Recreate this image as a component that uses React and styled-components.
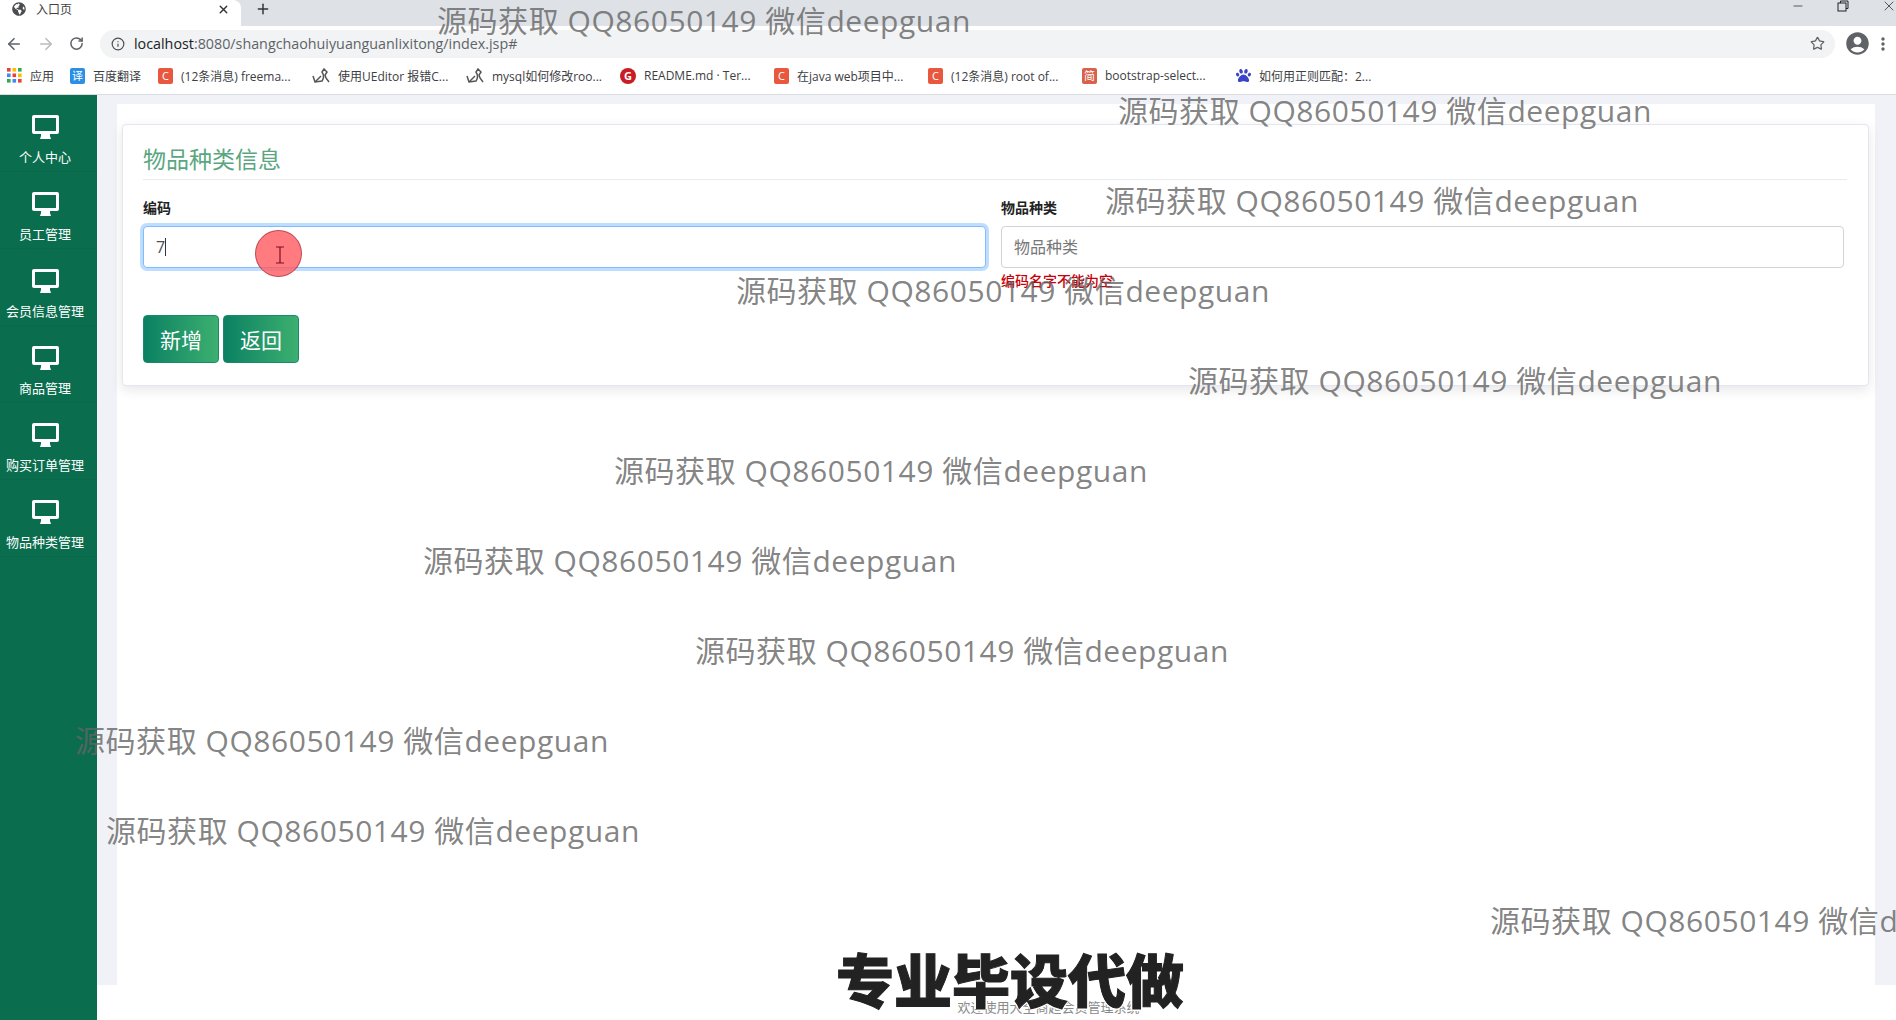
import React from 'react';
import styled, { createGlobalStyle } from 'styled-components';
import { ArrowLeft, ArrowRight, RotateCw, Info, Star, Plus, X, Minus } from 'lucide-react';
import { FaGlobeAmericas, FaPaw } from 'react-icons/fa';
import { MdAccountCircle, MdMoreVert } from 'react-icons/md';

const FONT = '"Open Sans", "Noto Sans CJK SC", "Liberation Sans", sans-serif';

const GlobalStyle = createGlobalStyle`
    html, body {
        margin: 0;
        padding: 0;
        background: #fff;
    }
    body {
        font-family: ${FONT};
        overflow: hidden;
    }
    * {
        box-sizing: border-box;
    }
`;

const menuItems = ['个人中心', '员工管理', '会员信息管理', '商品管理', '购买订单管理', '物品种类管理'];

const bookmarks = [
    { icon: 'apps', text: '应用', width: 63 },
    { icon: 'fanyi', text: '百度翻译', width: 88 },
    { icon: 'csdn', text: '(12条消息) freema...' },
    { icon: 'bird', text: '使用UEditor 报错C...' },
    { icon: 'bird', text: 'mysql如何修改roo...' },
    { icon: 'gitee', text: 'README.md · Ter...' },
    { icon: 'csdn', text: '在java web项目中...' },
    { icon: 'csdn', text: '(12条消息) root of...' },
    { icon: 'jian', text: 'bootstrap-select...' },
    { icon: 'paw', text: '如何用正则匹配：2...' },
];

const watermarks = [
    [437, -1], [1118, 89], [1105, 179], [736, 269], [1188, 359], [614, 449],
    [423, 539], [695, 629], [75, 719], [106, 809], [1490, 899],
];

function AppsIcon() {
    const colors = ['#ea4335', '#fbbc05', '#34a853', '#4285f4', '#ea4335', '#fbbc05', '#34a853', '#4285f4', '#ea4335'];
    return (
        <svg width="15" height="15" viewBox="0 0 15 15">
            {colors.map((c, i) => (
                <rect key={i} x={(i % 3) * 5.5} y={Math.floor(i / 3) * 5.5} width="3.6" height="3.6" fill={c} />
            ))}
        </svg>
    );
}

function BirdIcon() {
    return (
        <svg width="18" height="16" viewBox="0 0 18 16" fill="none" stroke="#555" strokeWidth="1.5">
            <path d="M1 8l2 6 7-1c2-3 2-6 0-9L12 1l3 3-2 3 1 3 3 4" />
            <path d="M3 14l6-6" />
        </svg>
    );
}

function MonitorIcon() {
    return (
        <svg width="27" height="24" viewBox="0 0 27 24">
            <path
                fill="#fff"
                fillRule="evenodd"
                d="M2 0h23a2 2 0 0 1 2 2v15a2 2 0 0 1-2 2h-7v2l1 3H8l1-3v-2H2a2 2 0 0 1-2-2V2a2 2 0 0 1 2-2zM3 3v13h21V3z"
            />
        </svg>
    );
}

function RestoreIcon() {
    return (
        <svg width="12" height="12" viewBox="0 0 12 12" fill="none" stroke="#222" strokeWidth="1">
            <rect x="1" y="3" width="8" height="8" />
            <path d="M3.5 3V1h7.5v7.5H9" />
        </svg>
    );
}

function Bookmark({ icon, text, width }) {
    return (
        <BookmarkItem $width={width}>
            {icon === 'apps' && <AppsIcon />}
            {icon === 'fanyi' && <FaviconBox $bg="#2b8fe6">译</FaviconBox>}
            {icon === 'csdn' && <FaviconBox $bg="#e9573f">C</FaviconBox>}
            {icon === 'jian' && <FaviconBox $bg="#d9604a">简</FaviconBox>}
            {icon === 'gitee' && <GiteeBadge>G</GiteeBadge>}
            {icon === 'bird' && <BirdIcon />}
            {icon === 'paw' && <FaPaw size={15} color="#3a44c4" />}
            <BookmarkText>{text}</BookmarkText>
        </BookmarkItem>
    );
}

export default function App() {
    return (
        <Page>
            <GlobalStyle />
            <Browser>
                <TabStrip>
                    <ActiveTab>
                        <FaGlobeAmericas size={14} color="#4a4d52" />
                        <TabTitle>入口页</TabTitle>
                        <X size={13} color="#333" strokeWidth={2.5} />
                    </ActiveTab>
                    <NewTab>
                        <Plus size={16} color="#333" strokeWidth={2.2} />
                    </NewTab>
                    <WindowControls>
                        <Minus size={14} color="#222" strokeWidth={1.2} />
                        <RestoreIcon />
                        <X size={16} color="#222" strokeWidth={1.1} />
                    </WindowControls>
                </TabStrip>
                <Toolbar>
                    <NavButtons>
                        <ArrowLeft size={18} color="#5f6368" strokeWidth={2.2} />
                        <ArrowRight size={18} color="#b9bcc0" strokeWidth={2.2} />
                        <RotateCw size={15} color="#5f6368" strokeWidth={2.4} />
                    </NavButtons>
                    <AddressBar>
                        <Info size={14} color="#4a4d52" strokeWidth={2} />
                        <UrlText>
                            <UrlHost>localhost</UrlHost>:8080/shangchaohuiyuanguanlixitong/index.jsp#
                        </UrlText>
                        <StarSlot>
                            <Star size={15} color="#5f6368" strokeWidth={2} />
                        </StarSlot>
                    </AddressBar>
                    <ProfileSlot>
                        <MdAccountCircle size={27} color="#5f6368" />
                        <MdMoreVert size={20} color="#5f6368" />
                    </ProfileSlot>
                </Toolbar>
                <BookmarkBar>
                    {bookmarks.map((b, i) => (
                        <Bookmark key={i} {...b} />
                    ))}
                </BookmarkBar>
            </Browser>

            <Body>
                <Sidebar>
                    {menuItems.map((item) => (
                        <MenuItem key={item}>
                            <MonitorIcon />
                            <MenuLabel>{item}</MenuLabel>
                        </MenuItem>
                    ))}
                </Sidebar>
                <Main>
                    <Content>
                        <Panel>
                            <Card>
                                <CardTitle>物品种类信息</CardTitle>
                                <FormGrid>
                                    <Field>
                                        <Label>编码</Label>
                                        <InputWrap>
                                            <Input $focused readOnly value="7" />
                                            <Caret />
                                        </InputWrap>
                                    </Field>
                                    <Field>
                                        <Label>物品种类</Label>
                                        <Input readOnly placeholder="物品种类" />
                                        <ErrorText>编码名字不能为空</ErrorText>
                                    </Field>
                                </FormGrid>
                                <Actions>
                                    <ActionButton>新增</ActionButton>
                                    <ActionButton>返回</ActionButton>
                                </Actions>
                            </Card>
                        </Panel>
                    </Content>
                    <Footer>欢迎使用大全商超会员管理系统</Footer>
                </Main>
            </Body>

            <ClickMarker>
                <svg width="10" height="18" viewBox="0 0 10 18" fill="none" stroke="#7a1020" strokeWidth="1.2">
                    <path d="M1 1h8M1 17h8M5 1v16" />
                </svg>
            </ClickMarker>
            {watermarks.map(([x, y]) => (
                <Watermark key={y} $x={x} $y={y}>源码获取 QQ86050149 微信deepguan</Watermark>
            ))}
            <Banner>专业毕设代做</Banner>
        </Page>
    );
}

const Page = styled.div`
    position: relative;
    width: 1896px;
    height: 1020px;
    overflow: hidden;
    display: flex;
    flex-direction: column;
`;

const Browser = styled.div`
    height: 95px;
    flex: none;
    display: flex;
    flex-direction: column;
    border-bottom: 1px solid #dadce0;
`;

const TabStrip = styled.div`
    height: 26px;
    background: #dee1e6;
    display: flex;
    align-items: stretch;
`;

const ActiveTab = styled.div`
    width: 241px;
    background: #fff;
    border-top-right-radius: 8px;
    padding: 0 11px 8px 12px;
    display: flex;
    align-items: center;
    gap: 10px;
`;

const TabTitle = styled.span`
    flex: 1;
    font-size: 12px;
    color: #444;
`;

const NewTab = styled.div`
    width: 44px;
    display: flex;
    align-items: center;
    justify-content: center;
    padding-bottom: 8px;
`;

const WindowControls = styled.div`
    margin-left: auto;
    display: flex;
    align-items: center;
    gap: 32px;
    padding: 0 0 14px;
    margin-right: -1px;
`;

const Toolbar = styled.div`
    height: 34px;
    display: flex;
    align-items: center;
    padding-top: 1px;
    background: #fff;
`;

const NavButtons = styled.div`
    width: 100px;
    padding-left: 5px;
    display: flex;
    align-items: center;
    gap: 14px;
`;

const AddressBar = styled.div`
    width: 1735px;
    height: 28px;
    background: #f1f3f4;
    border-radius: 14px;
    display: flex;
    align-items: center;
    padding: 0 10px 0 11px;
`;

const UrlText = styled.span`
    margin-left: 9px;
    font-size: 14.3px;
    color: #5f6368;
    white-space: nowrap;
`;

const UrlHost = styled.span`
    color: #202124;
`;

const StarSlot = styled.div`
    margin-left: auto;
    display: flex;
`;

const ProfileSlot = styled.div`
    flex: 1;
    display: flex;
    align-items: center;
    padding-left: 9px;
    gap: 2px;
`;

const BookmarkBar = styled.div`
    flex: 1;
    display: flex;
    align-items: center;
    padding: 0 0 3px 7px;
    background: #fff;
`;

const BookmarkItem = styled.div`
    width: ${(p) => p.$width || 154}px;
    flex: none;
    display: flex;
    align-items: center;
    gap: 8px;
`;

const BookmarkText = styled.span`
    font-size: 12px;
    color: #3c4043;
    white-space: nowrap;
`;

const FaviconBox = styled.span`
    width: 15px;
    height: 16px;
    border-radius: 2px;
    background: ${(p) => p.$bg};
    color: #fff;
    font-size: 11px;
    line-height: 16px;
    text-align: center;
    flex: none;
`;

const GiteeBadge = styled.span`
    width: 16px;
    height: 16px;
    border-radius: 50%;
    background: #c71d23;
    color: #fff;
    font-size: 11px;
    font-weight: 700;
    line-height: 16px;
    text-align: center;
    flex: none;
`;

const Body = styled.div`
    flex: 1;
    display: flex;
    min-height: 0;
`;

const Sidebar = styled.nav`
    width: 97px;
    flex: none;
    background: #0a6e4e;
`;

const MenuItem = styled.div`
    height: 77px;
    padding: 20px 7px 0 0;
    display: flex;
    flex-direction: column;
    align-items: center;
    border-bottom: 1px solid rgba(0, 0, 0, 0.03);
`;

const MenuLabel = styled.span`
    margin-top: 10px;
    font-size: 13px;
    line-height: 17px;
    color: #fff;
    white-space: nowrap;
`;

const Main = styled.main`
    flex: 1;
    display: flex;
    flex-direction: column;
    min-width: 0;
`;

const Content = styled.div`
    flex: 1;
    background: #f0f2f7;
    padding: 9px 21px 0 20px;
    display: flex;
`;

const Panel = styled.div`
    flex: 1;
    background: #fff;
    padding: 20px 6px 0 5px;
`;

const Card = styled.section`
    height: 262px;
    background: #fff;
    border: 1px solid #e3e6f0;
    border-radius: 4px;
    box-shadow: 0 4px 12px rgba(58, 59, 69, 0.12);
    padding: 19px 24px 0 20px;
`;

const CardTitle = styled.h2`
    margin: 0;
    height: 36px;
    font-size: 23px;
    font-weight: 400;
    line-height: 30px;
    color: #5aa67f;
    border-bottom: 1px solid #e9ecef;
    margin-right: -3px;
`;

const FormGrid = styled.div`
    display: grid;
    grid-template-columns: 843px 843px;
    column-gap: 15px;
    margin-top: 18px;
`;

const Field = styled.div`
    display: flex;
    flex-direction: column;
`;

const Label = styled.label`
    font-size: 14px;
    font-weight: 700;
    line-height: 20px;
    color: #222;
    margin-bottom: 8px;
`;

const InputWrap = styled.div`
    position: relative;
`;

const Input = styled.input`
    display: block;
    width: 100%;
    height: 42px;
    padding: 0 12px;
    font-family: ${FONT};
    font-size: 16px;
    color: #495057;
    background: #fff;
    border-radius: 4px;
    outline: none;
    border: 1px solid ${(p) => (p.$focused ? '#80bdff' : '#ced4da')};
    box-shadow: ${(p) => (p.$focused ? '0 0 0 3px rgba(0, 123, 255, 0.25)' : 'none')};
    &::placeholder {
        color: #777;
    }
`;

const Caret = styled.span`
    position: absolute;
    left: 22px;
    top: 12px;
    width: 1px;
    height: 18px;
    background: #333;
`;

const ErrorText = styled.span`
    margin-top: 4px;
    font-size: 14px;
    font-weight: 500;
    line-height: 18px;
    color: #c8000a;
`;

const Actions = styled.div`
    margin-top: 25px;
    display: flex;
    gap: 4px;
`;

const ActionButton = styled.button`
    width: 76px;
    height: 48px;
    border: 1px solid #1a8a6a;
    border-radius: 4px;
    background: linear-gradient(90deg, #0b8062, #3cb070);
    color: #fff;
    font-family: ${FONT};
    font-size: 21px;
    padding: 0;
`;

const Footer = styled.footer`
    height: 35px;
    flex: none;
    background: #fff;
    text-align: center;
    padding: 13px 0 0 104px;
    font-size: 13px;
    line-height: 18px;
    color: #8a8a8a;
`;

const ClickMarker = styled.div`
    position: absolute;
    left: 255px;
    top: 230px;
    width: 47px;
    height: 47px;
    border-radius: 50%;
    background: rgba(255, 90, 95, 0.8);
    border: 1px solid rgba(150, 40, 50, 0.6);
    display: flex;
    align-items: center;
    justify-content: center;
    padding: 3px 0 0 3px;
`;

const Watermark = styled.div`
    position: absolute;
    left: ${(p) => p.$x}px;
    top: ${(p) => p.$y}px;
    font-size: 30px;
    font-weight: 400;
    letter-spacing: 0.55px;
    line-height: 44px;
    color: rgba(100, 100, 100, 0.8);
    white-space: nowrap;
    pointer-events: none;
`;

const Banner = styled.div`
    position: absolute;
    left: 836px;
    top: 939px;
    font-size: 58px;
    font-weight: 900;
    line-height: 84px;
    color: #222;
    white-space: nowrap;
    -webkit-text-stroke: 1px #222;
    text-shadow: 0 0 2px #fff, 2px 0 0 #fff, -2px 0 0 #fff, 0 2px 0 #fff, 0 -2px 0 #fff;
`;
